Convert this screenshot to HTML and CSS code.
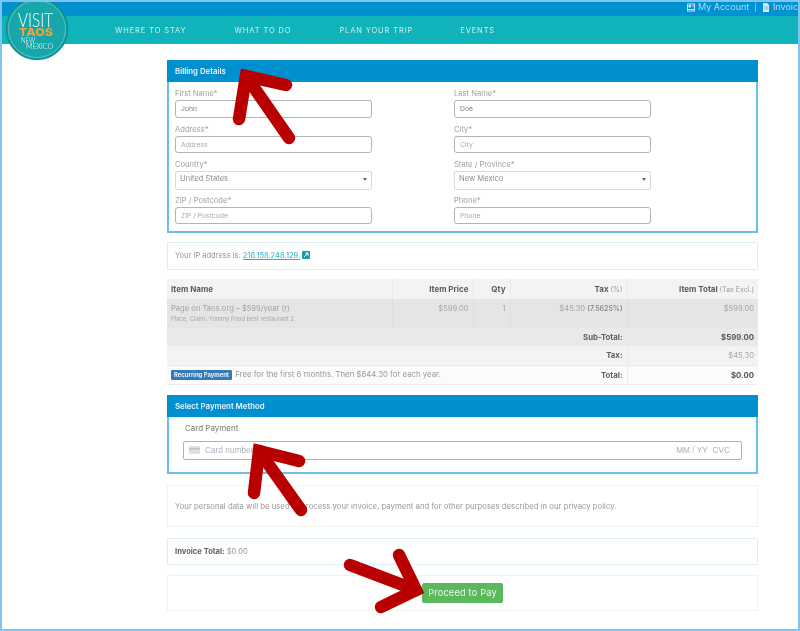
FILE: index.html
```html
<!DOCTYPE html>
<html lang="en">
<head>
<meta charset="utf-8">
<title>Checkout</title>
<link rel="stylesheet" href="styles.css">
</head>
<body>
<div class="frame">
  <div class="topbar">
    <span class="toplink"><svg class="ticon" viewBox="0 0 8 8"><rect x="0.5" y="0.5" width="7" height="7" fill="none" stroke="#c4e4f5"/><rect x="1.5" y="1.5" width="2.5" height="2.5" fill="#c4e4f5"/><path d="M1 6h6M5 2.5h2" stroke="#c4e4f5"/></svg>My Account</span>
    <span class="topsep">|</span>
    <span class="toplink"><svg class="ticon" viewBox="0 0 8 9"><path d="M1 0h4l2 2v7H1z" fill="#d4ecf8"/><path d="M2 4h4M2 6h4" stroke="#4aa8d8" stroke-width=".7"/></svg>Invoices</span>
  </div>
  <nav class="nav">
    <a class="navitem nav1">WHERE TO STAY</a>
    <a class="navitem nav2">WHAT TO DO</a>
    <a class="navitem nav3">PLAN YOUR TRIP</a>
    <a class="navitem">EVENTS</a>
  </nav>
  <main class="content">
    <section class="panel billing">
      <h2 class="panelhead">Billing Details</h2>
      <div class="formgrid">
        <div class="field"><label>First Name*</label><div class="input val">John</div></div>
        <div class="field"><label>Last Name*</label><div class="input val">Doe</div></div>
        <div class="field"><label>Address*</label><div class="input">Address</div></div>
        <div class="field"><label>City*</label><div class="input">City</div></div>
        <div class="field"><label>Country*</label><div class="select"><span>United States</span><i class="caret"></i></div></div>
        <div class="field"><label>State / Province*</label><div class="select"><span>New Mexico</span><i class="caret"></i></div></div>
        <div class="field"><label>ZIP / Postcode*</label><div class="input">ZIP / Postcode</div></div>
        <div class="field"><label>Phone*</label><div class="input">Phone</div></div>
      </div>
    </section>

    <div class="box ip">Your IP address is: <a class="iplink">216.158.248.129.</a><svg class="ext" viewBox="0 0 8 8"><rect width="8" height="8" rx="1" fill="#0f9fb5"/><path d="M2 6l3.6-3.6M3.4 2H6v2.6" stroke="#fff" fill="none"/></svg></div>

    <table class="items">
      <colgroup><col class="c1"><col class="c2"><col class="c3"><col class="c4"><col class="c5"></colgroup>
      <thead>
        <tr><th class="left">Item Name</th><th>Item Price</th><th>Qty</th><th>Tax <small>(%)</small></th><th>Item Total <small>(Tax Excl.)</small></th></tr>
      </thead>
      <tbody>
        <tr class="row">
          <td class="left name">Page on Taos.org – $599/year (r)<div class="sub">Place, Claim: Yummy Food best restaurant 2</div></td>
          <td>$599.00</td><td>1</td><td>$45.30 <b class="pct">(7.5625%)</b></td><td>$599.00</td>
        </tr>
        <tr class="subtotal"><td colspan="4" class="lab">Sub-Total:</td><td class="strong">$599.00</td></tr>
        <tr class="tax"><td colspan="4" class="lab">Tax:</td><td>$45.30</td></tr>
        <tr class="total">
          <td colspan="3" class="left recur"><span class="badge">Recurring Payment</span> Free for the first 6 months. Then $644.30 for each year.</td>
          <td class="lab">Total:</td><td class="strong">$0.00</td>
        </tr>
      </tbody>
    </table>

    <section class="panel payment">
      <h2 class="panelhead">Select Payment Method</h2>
      <div class="paybody">
        <div class="paytitle">Card Payment</div>
        <div class="card">
          <svg class="cardicon" viewBox="0 0 11 8"><rect width="11" height="8" rx="1" fill="#dde1e6"/><rect y="2" width="11" height="1.5" fill="#bcc3cb"/></svg>
          <span class="cardnum">Card number</span>
          <span class="cardright">MM / YY&nbsp; CVC</span>
        </div>
      </div>
    </section>

    <div class="box consent">Your personal data will be used to process your invoice, payment and for other purposes described in our privacy policy.</div>
    <div class="box invoice"><b>Invoice Total:</b> $0.00</div>
    <div class="box proceed"><button class="pay">Proceed to Pay</button></div>
  </main>

  <svg class="logo" viewBox="0 0 64 64" aria-label="Visit Taos New Mexico">
    <circle cx="32" cy="32" r="30.5" fill="#17a6a9" stroke="#0f8d93" stroke-width="1.5"/>
    <circle cx="32" cy="32" r="28.5" fill="none" stroke="#7fd2d2" stroke-width=".6"/>
    <text x="13" y="30" class="lvisit" textLength="35" lengthAdjust="spacingAndGlyphs">VISIT</text>
    <text x="14" y="38.5" class="ltaos" textLength="34" lengthAdjust="spacingAndGlyphs">TAOS</text>
    <text x="16" y="46" class="lnew" textLength="14" lengthAdjust="spacingAndGlyphs">NEW</text>
    <text x="21" y="52" class="lnew" textLength="27" lengthAdjust="spacingAndGlyphs">MEXICO</text>
  </svg>

  <svg class="arrows" viewBox="0 0 800 631">
    <g fill="none" stroke="#b90000" stroke-width="12.5" stroke-linecap="round" stroke-linejoin="miter">
      <path d="M286 85L246 76L239 119"/><path d="M246 76L289 138"/>
      <path d="M299 461L259 451L254 493"/><path d="M259 451L301 510"/>
      <path d="M399 555L416 590L381 607"/><path d="M416 590L350 565"/>
    </g>
  </svg>
</div>
</body>
</html>
```

FILE: styles.css
```css
* { box-sizing: border-box; }
html, body { margin: 0; padding: 0; background: #fff; }
body { font-family: Inter, "Open Sans", sans-serif; color: #8f8f8f; }
.frame {
  position: relative; width: 800px; height: 631px; overflow: hidden;
  border: 2px solid #7cc6f6; background: #fff; filter: blur(0.45px);
}
.topbar {
  height: 14px; background: #0091d1; display: flex; align-items: flex-start;
  padding: 0 0 0 685px; font-size: 9px; line-height: 10px; color: #b5dcf0; white-space: nowrap;
}
.toplink { display: inline-flex; align-items: center; }
.topsep { margin: 0 5px 0 5px; font-size: 8px; }
.ticon { width: 8px; height: 9px; margin-right: 3px; }
.nav {
  height: 28px; background: #0fb3b9; display: flex; align-items: center; padding-left: 113px;
  font-size: 7.5px; letter-spacing: .88px; color: #cdf1ee; white-space: nowrap;
}
.nav1 { margin-right: 48px; }
.nav2 { margin-right: 48px; }
.nav3 { margin-right: 47px; }
.content { width: 591px; margin: 16px 0 0 165px; }
.panel { border: 1px solid #6cc0e3; border-width: 0 2px 2px 2px; background: #fff; }
.panelhead {
  margin: 0 -2px; height: 22px; line-height: 23px; background: #0090d0; color: #e8f6fc;
  font-size: 7.8px; font-weight: 600; padding-left: 8px;
}
.billing { height: 173px; margin-bottom: 9px; }
.formgrid {
  display: grid; grid-template-columns: 197px 197px; column-gap: 82px; row-gap: 0;
  padding: 6px 0 0 6px; grid-auto-rows: 35.5px;
}
.field label { display: block; font-size: 7.6px; line-height: 11px; height: 12px; color: #a0a0a0; }
.input {
  height: 17.5px; border: 1.5px solid #b4b4b4; border-radius: 3px; font-size: 6.8px; line-height: 15px;
  padding-left: 5px; color: #a9a9a9; background: #fff;
}
.input.val { color: #7d7d7d; }
.select {
  height: 19px; border: 1px solid #dadada; border-radius: 2px; font-size: 7.6px; line-height: 13px;
  padding-left: 4px; color: #8d8d8d; display: flex; justify-content: space-between;
}
.caret { width: 0; height: 0; border: 2px solid transparent; border-top: 3px solid #666; margin: 6px 4px 0 0; }
.box { border: 1px solid #edf5e9; background: #fff; }
.ip {
  height: 28px; line-height: 25px; border-color: #dcedf5; margin-bottom: 9px; padding-left: 7px;
  font-size: 7.5px; color: #959595; display: block;
}
.iplink { color: #2fb0c4; text-decoration: underline; }
.ext { width: 8px; height: 8px; margin-left: 2px; vertical-align: -1px; }
.items {
  width: 591px; border-collapse: collapse; table-layout: fixed; font-size: 7.6px; margin-bottom: 10px; color: #a6a6a6;
}
.c1 { width: 225px; } .c2 { width: 81px; } .c3 { width: 37px; } .c4 { width: 117px; } .c5 { width: 131px; }
.items th, .items td { text-align: right; padding: 0 4px; }
.items .left { text-align: left; }
.items thead tr { height: 20px; background: #f3f3f3; }
.items th { font-weight: 700; font-size: 8px; color: #5c5c5c; border-right: 1px solid #e8e8e8; }
.items th:last-child { border-right: 0; }
.items small { font-weight: 400; color: #9d9d9d; font-size: 7px; }
.row { height: 29px; background: #e5e5e5; }
.row td { vertical-align: top; padding-top: 5px; border-right: 1px solid #e0e0e0; }
.row td:last-child { border-right: 0; }
.name { color: #a3a3a3; }
.sub { font-size: 5.9px; margin-top: 2px; color: #a8a8a8; }
.pct { font-weight: 600; color: #8a8a8a; font-size: 7px; }
.subtotal { height: 18px; background: #e9e9e9; }
.tax { height: 19px; background: #f3f3f3; }
.total { height: 19px; background: #fbfbfb; border-bottom: 1px solid #ececec; border-top: 1px solid #e8e8e8; }
.lab { font-weight: 700; color: #5f5f5f; font-size: 7.8px; }
.strong { font-weight: 700; color: #555; font-size: 7.8px; }
.items .tax td:last-child, .items .total td:last-child, .items .subtotal td:last-child { border-left: 1px solid #ececec; }
.recur { color: #9b9b9b; white-space: nowrap; font-size: 7.8px; }
.badge {
  display: inline-block; background: #337ab7; color: #e8f1f8; font-size: 5.9px; font-weight: 700;
  padding: 0 3px; line-height: 10px; border-radius: 1px; margin-right: 1px; vertical-align: 0;
}
.payment { height: 79px; margin-bottom: 11px; }
.paybody { padding: 0 14px; }
.paytitle { font-size: 8px; color: #777; line-height: 11px; padding: 6px 0 0 2px; height: 24px; }
.card {
  height: 19px; border: 1.5px solid #adb1b7; border-radius: 2px; display: flex; align-items: center;
  padding: 0 11px 0 5px; font-family: "Liberation Sans", Arial, sans-serif; font-size: 8.3px; color: #aab2bc;
}
.cardicon { width: 11px; height: 8px; margin-right: 5px; }
.cardnum { flex: 1; }
.consent { height: 42px; line-height: 40px; padding-left: 7px; font-size: 7.75px; color: #989898; margin-bottom: 11px; white-space: nowrap; }
.invoice { height: 27px; line-height: 25px; padding-left: 7px; font-size: 7.6px; border-color: #deeef7; margin-bottom: 10px; color: #9a9a9a; }
.invoice b { color: #5f5f5f; }
.proceed { height: 36px; display: flex; align-items: flex-start; padding: 7px 0 0 254px; }
.pay {
  width: 81px; height: 20px; border: 0; padding: 0; border-radius: 2px; background: #5cb85c; color: #eef8ee;
  font-family: Inter, sans-serif; font-size: 9.2px; letter-spacing: .2px;
}
.logo { position: absolute; left: 3px; top: -5px; width: 64px; height: 64px; }
.logo text { fill: #fff; }
.lvisit { font: 300 19px Lato, sans-serif; }
.logo .ltaos { font: 800 11px Inter, sans-serif; fill: #eea437; }
.lnew { font: 300 7.5px Lato, sans-serif; }
.arrows { position: absolute; left: -2px; top: -2px; width: 800px; height: 631px; }
```
